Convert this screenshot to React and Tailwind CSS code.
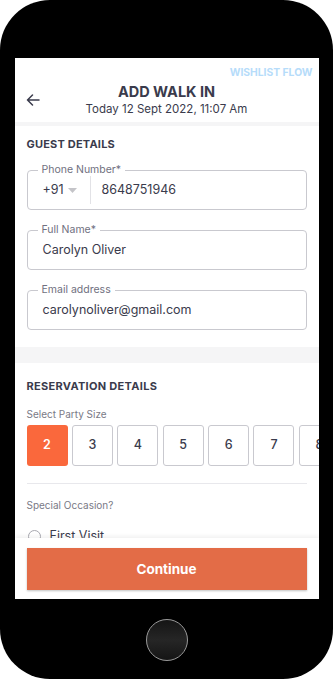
import React from "react";

function Field({ label, children }) {
  return (
    <fieldset className="border border-[#c9c9cf] rounded-[4px] px-0 pb-[5px] m-0">
      <legend className="ml-[10px] px-[4px] text-[10.5px] leading-[12px] text-[#707080]">{label}</legend>
      <div className="h-[28px] flex items-center pl-[15px] text-[12.5px] text-[#3a3b4c]">{children}</div>
    </fieldset>
  );
}

export default function App() {
  const sizes = [2, 3, 4, 5, 6, 7, 8];
  return (
    <div className="w-[334px] h-[679px] bg-white" style={{ fontFamily: "Inter, 'Open Sans', sans-serif" }}>
      <div className="w-[333px] h-[679px] bg-black rounded-[50px] pt-[58px] flex flex-col items-center">
        <div className="w-[304px] h-[541px] bg-white overflow-hidden flex flex-col">
          <div className="flex-1 overflow-hidden flex flex-col">
            {/* header */}
            <div className="pt-[8px] pb-[4px]">
              <div className="h-[12px] pr-[6px] text-right text-[10.3px] leading-[12px] font-bold text-[#b6dcfa]">WISHLIST FLOW</div>
              <div className="mt-[5px] grid grid-cols-[40px_1fr_40px] items-start">
                <div className="pl-[11px] pt-[11px]">
                  <svg width="14" height="12" viewBox="0 0 14 12" fill="none" stroke="#3a3b4c" strokeWidth="1.5" strokeLinecap="round" strokeLinejoin="round">
                    <path d="M13 6H1.5M6.5 1L1.5 6l5 5" />
                  </svg>
                </div>
                <div className="text-center">
                  <div className="text-[14.5px] leading-[17px] font-bold text-[#3a3b4c]">ADD WALK IN</div>
                  <div className="text-[11.5px] leading-[18px] text-[#3a3b4c]">Today 12 Sept 2022, 11:07 Am</div>
                </div>
                <div />
              </div>
            </div>
            <div className="h-[4px] bg-[#f5f5f6] shrink-0" />
            {/* guest details */}
            <div className="px-[12px] pt-[11px] pb-[17px]">
              <div className="text-[11px] leading-[14px] font-bold tracking-[0.2px] text-[#3a3b4c]">GUEST DETAILS</div>
              <div className="mt-[13px] flex flex-col gap-[14px]">
                <Field label="Phone Number*">
                  <span className="w-[20px]">+91</span>
                  <svg className="ml-[5px]" width="9" height="5" viewBox="0 0 9 5"><path d="M0 0h9L4.5 5z" fill="#c4c4c8" /></svg>
                  <div className="ml-[13px] w-px h-[28px] bg-[#e2e2e6]" />
                  <span className="ml-[11px]">8648751946</span>
                </Field>
                <Field label="Full Name*">Carolyn Oliver</Field>
                <Field label="Email address">carolynoliver@gmail.com</Field>
              </div>
            </div>
            <div className="h-[16px] bg-[#f5f5f6] shrink-0" />
            {/* reservation details */}
            <div className="pl-[12px] pt-[16px]">
              <div className="text-[11px] leading-[14px] font-bold tracking-[0.3px] text-[#3a3b4c]">RESERVATION DETAILS</div>
              <div className="mt-[15px] text-[10px] leading-[12px] text-[#7a7a86]">Select Party Size</div>
              <div className="mt-[5px] flex gap-[4.4px]">
                {sizes.map((n) =>
                  n === 2 ? (
                    <div key={n} className="w-[41px] h-[41px] shrink-0 rounded-[3px] bg-[#fa683c] flex items-center justify-center text-[12.5px] font-semibold text-white">{n}</div>
                  ) : (
                    <div key={n} className="w-[41px] h-[41px] shrink-0 rounded-[3px] border border-[#c9c9cf] flex items-center justify-center text-[12.5px] font-medium text-[#3a3b4c]">{n}</div>
                  )
                )}
              </div>
              <div className="mt-[17px] mr-[12px] h-px bg-[#e8e8ec]" />
              <div className="mt-[15px] text-[10px] leading-[12px] text-[#7a7a86]">Special Occasion?</div>
              <div className="mt-[17px] flex items-center">
                <div className="w-[13px] h-[13px] rounded-full border border-[#a8a8b0] ml-[1px]" />
                <span className="ml-[9px] text-[12.5px] leading-[16px] text-[#3a3b4c]">First Visit</span>
              </div>
            </div>
          </div>
          {/* footer */}
          <div className="h-[61px] shrink-0 bg-white shadow-[0_-2px_4px_rgba(0,0,0,0.06)] px-[12px] pt-[10px]">
            <div className="h-[42px] bg-[#e36c47] flex items-center justify-center text-white text-[13.5px] font-bold shadow-[0_1px_2px_rgba(0,0,0,0.25)]">Continue</div>
          </div>
        </div>
        <div className="mt-[20px] w-[42px] h-[42px] rounded-full border border-[#9a9a9a] bg-[linear-gradient(#151515,#262626,#151515)]" />
      </div>
    </div>
  );
}
